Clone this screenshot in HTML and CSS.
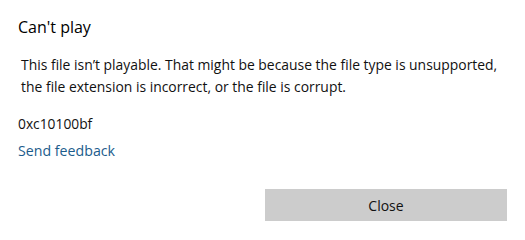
FILE: index.html
```html
<!DOCTYPE html>
<html lang="en">
	<head>
		<meta charset="UTF-8" />
		<meta name="viewport" content="width=device-width, initial-scale=1.0" />
		<title>Can't play</title>
		<link rel="stylesheet" href="styles.css">
	</head>
	<body>
		<div class="dialog">
			<h1 class="title">Can't play</h1>
			<p class="message">
				This file isn’t playable. That might be because the file type is unsupported,
				the file extension is incorrect, or the file is corrupt.
			</p>
			<div class="code">0xc10100bf</div>
			<a class="feedback" href="#">Send feedback</a>
			<div class="actions">
				<button class="close">Close</button>
			</div>
		</div>
	</body>
</html>
```

FILE: styles.css
```css
body {
	margin: 0;
	font-family: "Open Sans", "Noto Sans", sans-serif;
	background: #fff;
	color: #111;
}
.dialog {
	width: 525px;
	height: 240px;
	box-sizing: border-box;
	padding: 15px 18px 0 18px;
	display: flex;
	flex-direction: column;
}
.title {
	margin: 0;
	font-size: 16px;
	font-weight: 400;
	line-height: 24px;
	color: #000;
}
.message {
	margin: 15px 0 0 3px;
	font-size: 13.9px;
	line-height: 22px;
	color: #111;
}
.code {
	margin-top: 16px;
	font-size: 13.8px;
	line-height: 20px;
}
.feedback {
	margin-top: 7px;
	font-size: 14.2px;
	line-height: 20px;
	color: #1c5c8c;
	text-decoration: none;
	align-self: flex-start;
}
.actions {
	display: flex;
	justify-content: flex-end;
	margin-top: 28px;
}
.close {
	width: 242px;
	height: 32px;
	margin-right: 0;
	padding: 0;
	border: none;
	background: #cccccc;
	font-family: inherit;
	font-size: 14px;
	color: #111;
}
```
